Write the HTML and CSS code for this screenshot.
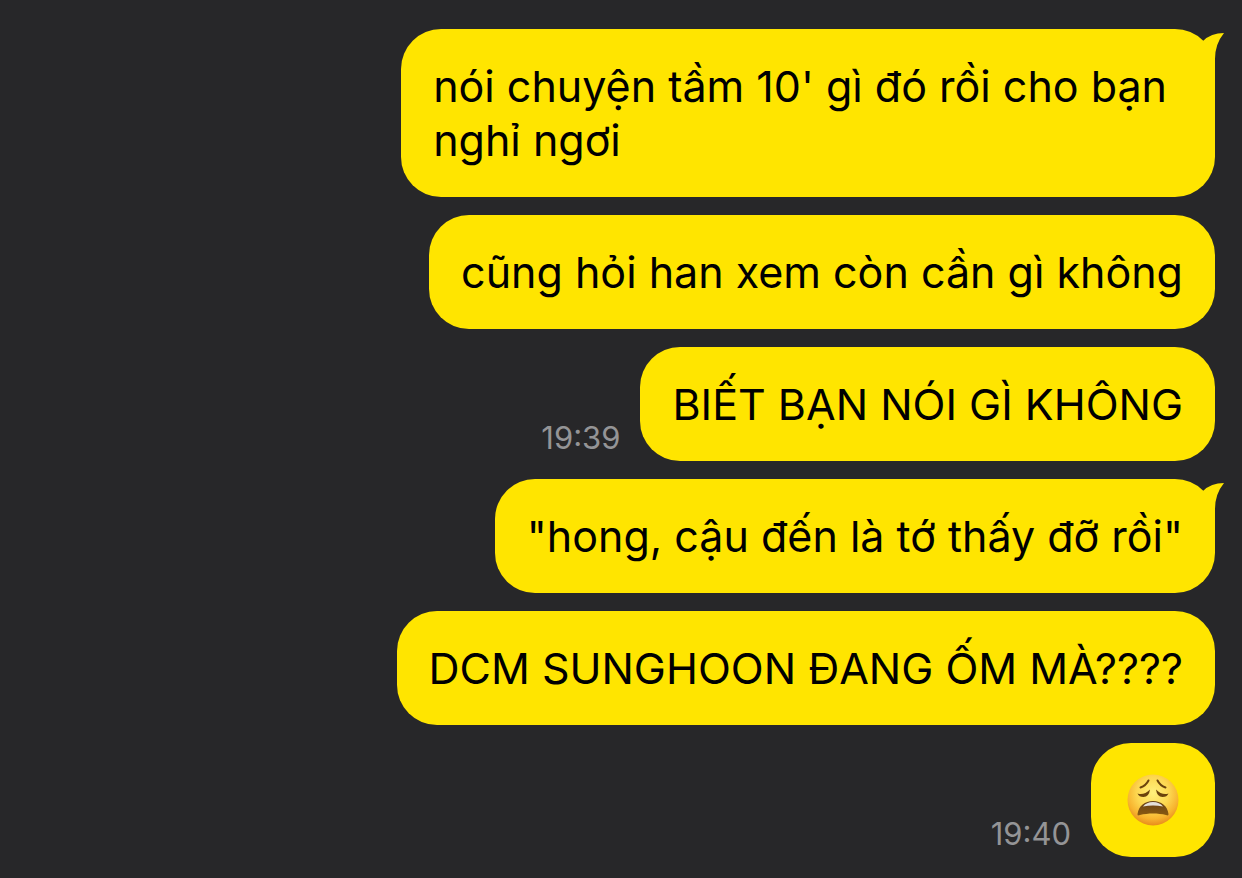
FILE: index.html
```html
<!DOCTYPE html>
<html lang="vi">
<head>
  <meta charset="UTF-8">
  <meta name="viewport" content="width=device-width, initial-scale=1.0">
  <title>Chat</title>
  <link rel="stylesheet" href="styles.css">
</head>
<body>
  <main class="chat">
    <div class="message">
      <p class="bubble bubble-long">
        nói chuyện tầm 10' gì đó rồi cho bạn<br>nghỉ ngơi
        <svg class="tail" viewBox="0 0 24 44" aria-hidden="true">
          <path d="M0 10 L3 8 Q11 0 24 0 Q15 11 15 26 V44 H0 Z"/>
        </svg>
      </p>
    </div>
    <div class="message">
      <p class="bubble">cũng hỏi han xem còn cần gì không</p>
    </div>
    <div class="message">
      <time class="time">19:39</time>
      <p class="bubble">BIẾT BẠN NÓI GÌ KHÔNG</p>
    </div>
    <div class="message">
      <p class="bubble">
        "hong, cậu đến là tớ thấy đỡ rồi"
        <svg class="tail" viewBox="0 0 24 44" aria-hidden="true">
          <path d="M0 10 L3 8 Q11 0 24 0 Q15 11 15 26 V44 H0 Z"/>
        </svg>
      </p>
    </div>
    <div class="message">
      <p class="bubble">DCM SUNGHOON ĐANG ỐM MÀ????</p>
    </div>
    <div class="message">
      <time class="time">19:40</time>
      <div class="bubble bubble-emoji">
        <svg class="emoji" viewBox="0 0 52 52" role="img" aria-label="weary face">
          <defs>
            <radialGradient id="face" cx="0.5" cy="0.36" r="0.64">
              <stop offset="0" stop-color="#fff07c"/>
              <stop offset="0.5" stop-color="#fdd750"/>
              <stop offset="0.8" stop-color="#f7b32e"/>
              <stop offset="1" stop-color="#e88c1c"/>
            </radialGradient>
            <linearGradient id="mouth" x1="0" y1="0" x2="0" y2="1">
              <stop offset="0" stop-color="#684018"/>
              <stop offset="1" stop-color="#8a5a10"/>
            </linearGradient>
          </defs>
          <circle cx="26" cy="26" r="25.5" fill="url(#face)"/>
          <g fill="none" stroke="#6b430c" stroke-width="2" stroke-linecap="round">
            <path d="M13.5 13.5 Q19 11.5 21.5 6.500"/>
            <path d="M38.5 13.5 Q33 11.5 30.5 6.500"/>
          </g>
          <g fill="#6b430c">
            <path d="M10.500 19.500 Q17 21.500 23 15.500 Q22 23 16.500 23 Q12 23 10.500 19.500 Z"/>
            <path d="M41.500 19.500 Q35 21.500 29 15.500 Q30 23 35.500 23 Q40 23 41.500 19.500 Z"/>
          </g>
          <path fill="url(#mouth)" d="M10.500 40 C11.500 32 18 27 26 27 C34 27 40.500 32 41.500 40 C41.500 42 40 41.500 39 41 C31 39 21 39 13 41 C12 41.500 10.500 42 10.500 40 Z"/>
          <path fill="#e4dfda" d="M16 32.500 Q19.500 28 26 28 Q32.500 28 36 32.500 Q26 30.500 16 32.500 Z"/>
        </svg>
      </div>
    </div>
  </main>
</body>
</html>
```
FILE: styles.css
```css
body {
  margin: 0;
  background: #272729;
  font-family: Inter, "Liberation Sans", sans-serif;
}

.chat {
  display: flex;
  flex-direction: column;
  gap: 18px;
  padding: 29px 27px 21px;
}

.message {
  display: flex;
  justify-content: flex-end;
  align-items: flex-end;
  gap: 20px;
}

.bubble {
  position: relative;
  margin: 0;
  padding: 30px 32px;
  border-radius: 40px;
  background: #ffe500;
  color: #000;
  font-size: 43px;
  line-height: 54px;
}

.bubble-long {
  padding-right: 48px;
}

.tail {
  position: absolute;
  top: 4px;
  right: -9px;
  width: 24px;
  height: 44px;
  fill: #ffe500;
}

.bubble-emoji {
  display: flex;
  align-items: center;
  height: 54px;
  padding: 30px 36px;
}

.emoji {
  width: 52px;
  height: 52px;
}

.time {
  padding-bottom: 5px;
  color: #949496;
  font-size: 31px;
  line-height: 36px;
}
```
